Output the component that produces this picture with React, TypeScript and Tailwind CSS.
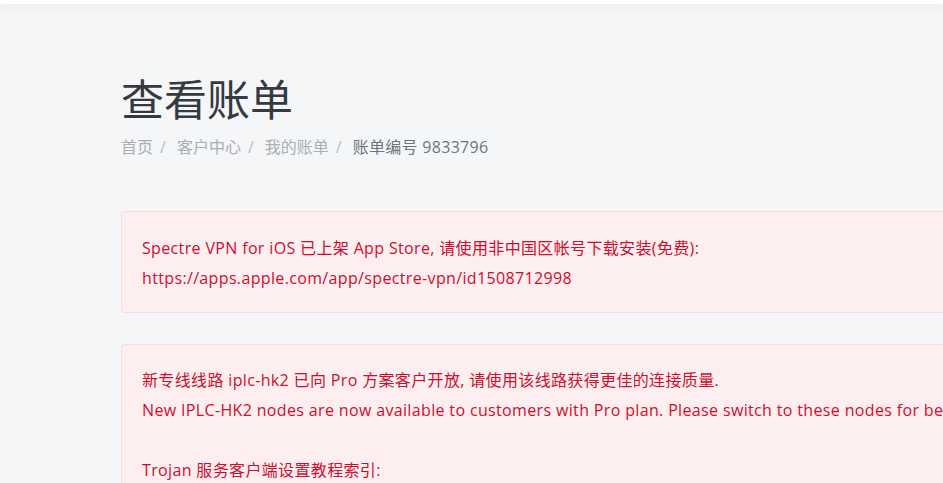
import React from 'react';

const crumbs = ['首页', '客户中心', '我的账单'];

export default function App() {
  return (
    <div className="h-[483px] w-[943px] overflow-hidden bg-[#f5f6f8] font-['Open_Sans','Noto_Sans_CJK_SC',sans-serif]">
      {/* top bar */}
      <div className="h-[4px] bg-white shadow-[0_2px_10px_rgba(0,0,0,0.08)]" />

      <div className="ml-[121px] w-[1100px]">
        {/* page header */}
        <h1 className="mt-[68px] text-[43px] leading-[56px] font-normal text-[#343a40]">查看账单</h1>
        <nav className="mt-[7px] flex items-center text-[16px] leading-[24px] text-[#a9aeb3]">
          {crumbs.map((c) => (
            <React.Fragment key={c}>
              <span>{c}</span>
              <span className="pl-[7px] pr-[11px] text-[#b8bdc2]">/</span>
            </React.Fragment>
          ))}
          <span className="text-[#6c757d] tracking-[0.3px]">账单编号 9833796</span>
        </nav>

        {/* notices */}
        <div className="mt-[52px] rounded-[4px] border border-[#fadcdf] bg-[#fdeeef] pt-[21px] pb-[19px] pl-[20px] text-[16px] leading-[30px] tracking-[0.35px] text-[#cc0f2f]">
          <p>Spectre VPN for iOS 已上架 App Store, 请使用非中国区帐号下载安装(免费):</p>
          <p>https://apps.apple.com/app/spectre-vpn/id1508712998</p>
        </div>

        <div className="mt-[31px] rounded-[4px] border border-[#fadcdf] bg-[#fdeeef] pt-[20px] pb-[20px] pl-[20px] text-[16px] leading-[30px] tracking-[0.35px] text-[#cc0f2f]">
          <p>新专线线路 iplc-hk2 已向 Pro 方案客户开放, 请使用该线路获得更佳的连接质量.</p>
          <p className="whitespace-nowrap">New IPLC-HK2 nodes are now available to customers with Pro plan. Please switch to these nodes for better connection quality.</p>
          <p>&nbsp;</p>
          <p>Trojan 服务客户端设置教程索引:</p>
          <p>&nbsp;</p>
        </div>
      </div>
    </div>
  );
}
